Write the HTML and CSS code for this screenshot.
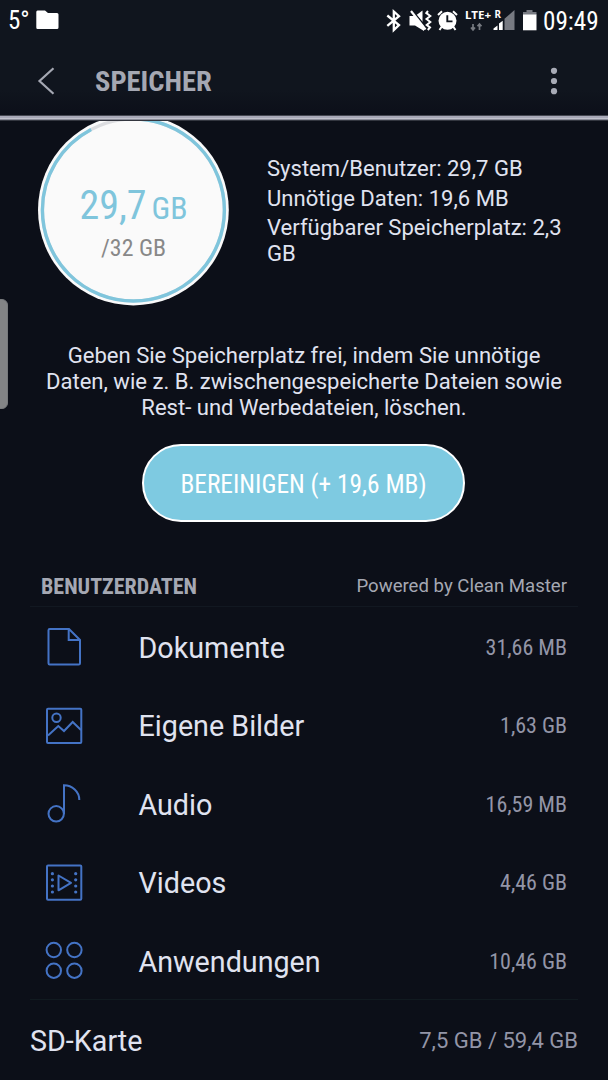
FILE: index.html
```html
<!DOCTYPE html>
<html lang="de">
<head>
<meta charset="utf-8">
<title>Speicher</title>
<link rel="stylesheet" href="styles.css">
</head>
<body>
<div class="screen">
  <div class="top">
    <div class="status">
      <span class="temp cond">5°</span>
      <svg class="folder" width="23" height="20" viewBox="0 0 23 20"><path d="M1.5 0.5H9L12 3H21Q22.5 3 22.5 4.5V17.5Q22.5 19 21 19H1.5Q0.3 19 0.3 17.5V2Q0.3 .5 1.5 .5Z" fill="#fff"/></svg>
      <svg class="tray" width="154" height="32" viewBox="0 -8 154 32">
        <path d="M2.3 6.5L14 16L8.8 21V2.5L14 7.2L2.3 16.8" fill="none" stroke="#fff" stroke-width="2.3"/>
        <g fill="#fff"><path d="M24.5 7H30L39 17.5V22L30 16.5H24.5Z"/><path d="M31.5 6L37.5 1.5V13Z"/></g>
        <path d="M27.5 1.5L42 19.5" stroke="#10151e" stroke-width="1.2"/>
        <path d="M26 2L40.5 20.5" stroke="#fff" stroke-width="2.2"/>
        <path d="M43 2L41.3 4L45.3 7L41.5 10L45.3 13L41.7 16L45 18.5L42.8 21" fill="none" stroke="#fff" stroke-width="2"/>
        <circle cx="62.5" cy="11.8" r="9" fill="#fff"/>
        <path d="M53 6L57 2.3M72 6L68 2.3M56.5 18L54.5 21M68.5 18L70.5 21" stroke="#fff" stroke-width="2"/>
        <path d="M62.3 6.2V12.4H67.5" fill="none" stroke="#10151e" stroke-width="1.9"/>
        <path d="M88 15V21M86 18.5L88 21L90 18.5M94.5 21V15M92.5 17.3L94.5 15L96.5 17.3" fill="none" stroke="#777b82" stroke-width="1.7"/>
        <path d="M119.5 9.7L129.5 1V21H119.5Z" fill="#777a82"/>
        <path d="M114 14.5L117.7 11.8V21H114ZM108.5 19.5L112.5 16.5V21H108.5Z" fill="#fff"/>
        <path d="M141.5 1H147.5V3H151.5V6H138V3H141.5Z" fill="#777a82"/>
        <path d="M138 5.5H151.5V21.3H138Z" fill="#fff"/>
        <text class="net" x="80" y="10.2" textLength="26" lengthAdjust="spacingAndGlyphs">LTE+</text>
        <text class="net" x="109.5" y="9.2" textLength="6.5" lengthAdjust="spacingAndGlyphs">R</text>
      </svg>
      <span class="clock cond">09:49</span>
    </div>
    <div class="header">
      <svg class="back" width="18" height="28" viewBox="0 0 18 28"><path d="M16.5 1.3L2.5 14L16.5 26.7" fill="none" stroke="#a5a8b3" stroke-width="2.2"/></svg>
      <h1 class="title cond">SPEICHER</h1>
      <svg class="more" width="8" height="28" viewBox="0 0 8 28" fill="#a8abb6"><circle cx="4" cy="3.8" r="3.1"/><circle cx="4" cy="14" r="3.1"/><circle cx="4" cy="24.2" r="3.1"/></svg>
    </div>
    <div class="edge"></div>
  </div>

  <div class="summary">
    <svg class="ring" width="192" height="185" viewBox="38 121 192 185">
      <circle cx="133.4" cy="210" r="95.4" fill="#fafafa"/>
      <circle cx="133.4" cy="210" r="91" fill="none" stroke="#dcdde0" stroke-width="3.2"/>
      <circle cx="133.4" cy="210" r="91" fill="none" stroke="#7fc5dc" stroke-width="3.4" pathLength="100" stroke-dasharray="92.3 7.7" transform="rotate(-90 133.4 210)"/>
      <text class="used" x="79.5" y="218.8" textLength="67" lengthAdjust="spacingAndGlyphs">29,7</text>
      <text class="used-unit" x="151.5" y="218.8" textLength="36" lengthAdjust="spacingAndGlyphs">GB</text>
      <text class="total" x="101" y="255.7" textLength="65" lengthAdjust="spacingAndGlyphs">/32 GB</text>
    </svg>
    <div class="facts">
      <p>System/Benutzer: 29,7 GB</p>
      <p>Unnötige Daten: 19,6 MB</p>
      <p>Verfügbarer Speicherplatz: 2,3 GB</p>
    </div>
  </div>
  <p class="hint">Geben Sie Speicherplatz frei, indem Sie unnötige<br>Daten, wie z. B. zwischengespeicherte Dateien sowie<br>Rest- und Werbedateien, löschen.</p>
  <button class="clean"><span class="cond">BEREINIGEN (+ 19,6 MB)</span></button>

  <div class="section">
    <h2 class="cond">BENUTZERDATEN</h2>
    <span class="powered">Powered by Clean Master</span>
  </div>
  <div class="list">
    <div class="row">
      <svg class="icon" viewBox="0 0 40 40"><path d="M5.7 2H25L36 13V36.2Q36 37.5 34.7 37.5H5.7Q4.5 37.5 4.5 36.2V3.2Q4.5 2 5.7 2ZM24.7 2V13H36"/></svg>
      <span class="name">Dokumente</span><span class="value cond">31,66 MB</span>
    </div>
    <div class="row">
      <svg class="icon" viewBox="0 0 40 40"><rect x="3" y="2.7" width="34.3" height="34.3" rx="1"/><circle cx="12.5" cy="11.8" r="4.2"/><path d="M4 29.5L14.3 20L20 25L28.7 16L37 24"/></svg>
      <span class="name">Eigene Bilder</span><span class="value cond">1,63 GB</span>
    </div>
    <div class="row">
      <svg class="icon" viewBox="0 0 40 40"><circle cx="12.2" cy="29.8" r="7.7"/><path d="M20 30V1.2C28 1.2 35.5 7.5 35.3 16"/></svg>
      <span class="name">Audio</span><span class="value cond">16,59 MB</span>
    </div>
    <div class="row">
      <svg class="icon" viewBox="0 0 40 40"><rect x="3" y="2.5" width="34.3" height="34.3" rx="1"/><path d="M14.5 12.5V27.3L27 19.8Z" stroke-linejoin="round"/><g fill="#4473c5" stroke="none"><circle cx="8.4" cy="10.7" r="1.6"/><circle cx="8.4" cy="16.8" r="1.6"/><circle cx="8.4" cy="23" r="1.6"/><circle cx="8.4" cy="29" r="1.6"/><circle cx="31.7" cy="10.7" r="1.6"/><circle cx="31.7" cy="16.8" r="1.6"/><circle cx="31.7" cy="23" r="1.6"/><circle cx="31.7" cy="29" r="1.6"/></g></svg>
      <span class="name">Videos</span><span class="value cond">4,46 GB</span>
    </div>
    <div class="row">
      <svg class="icon" viewBox="0 0 40 40"><circle cx="9.8" cy="9" r="7.2"/><circle cx="30.4" cy="9" r="7.2"/><circle cx="9.8" cy="29.7" r="7.2"/><circle cx="30.4" cy="29.7" r="7.2"/></svg>
      <span class="name">Anwendungen</span><span class="value cond">10,46 GB</span>
    </div>
  </div>
  <div class="sd"><span class="name">SD-Karte</span><span class="sd-value">7,5 GB / 59,4 GB</span></div>
  <div class="handle"></div>
</div>
</body>
</html>
```

FILE: styles.css
```css
* { box-sizing: border-box; margin: 0; padding: 0; }
body { background: #0c0f18; font-family: Roboto, "Liberation Sans", sans-serif; color: #e0e3f0; }
.screen { position: relative; width: 608px; height: 1080px; overflow: hidden; }
.cond { font-family: "Roboto Condensed", Roboto, sans-serif; font-stretch: 75%; white-space: nowrap; }

.top { height: 121px; background: linear-gradient(#10151e 90px, #0c0f19 115px); }
.status { display: flex; height: 40px; padding: 9px 9px 0 8px; }
.temp { width: 28px; font-size: 25px; line-height: 24px; color: #fff; }
.folder { margin-top: 1px; }
.tray { margin: -8px 0 0 326px; flex: none; overflow: visible; }
.clock { margin-left: 4px; font-size: 25.2px; line-height: 25px; color: #fff; }
.net { font: bold 10.5px "Noto Sans", sans-serif; fill: #fff; }
.header { display: flex; align-items: center; height: 75px; padding: 7px 50px 0 37px; }
.title { margin-left: 40px; padding-top: 2px; font-size: 28.5px; line-height: 34px; font-weight: 700; color: #a5a8b3; }
.more { margin-left: auto; }
.edge { height: 6px; background: linear-gradient(#454852 0 1px, #a8a9b8 1px 3px, #c0c1cc 3px 4px, #898b98 4px 5px, #33363f 5px); }

.summary { display: flex; height: 222px; padding-left: 38px; }
.ring { flex: none; }
.used { font: 40px "Roboto Condensed", Roboto, sans-serif; fill: #7fc5dc; }
.used-unit { font: 31px "Roboto Condensed", Roboto, sans-serif; fill: #7fc5dc; }
.total { font: 23px "Roboto Condensed", Roboto, sans-serif; fill: #888; }
.facts { width: 312px; margin-left: 37px; padding-top: 35px; font-size: 22.05px; line-height: 25.6px; }
.facts p + p { margin-top: 4px; }
.hint { text-align: center; font-size: 22.07px; line-height: 25.8px; }
.clean { display: flex; align-items: center; justify-content: center; width: 323px; height: 78px; margin: 23.5px 0 0 142px; padding-top: 3px; border: 2px solid #fff; border-radius: 39px; background: #7ecae1; color: #fff; font-size: 25.4px; }

.section { display: flex; justify-content: space-between; align-items: flex-end; height: 85px; margin: 0 30px; padding: 0 11px 6px; border-bottom: 1px solid #121821; }
h2 { font-size: 22px; line-height: 26px; font-weight: 700; color: #a5a8b3; }
.powered { font-size: 18.6px; line-height: 27px; color: #a5a8b3; }
.row { display: flex; align-items: center; height: 78.5px; padding: 2px 41px 0 44px; }
.icon { width: 40px; height: 40px; margin-right: 54.5px; fill: none; stroke: #4473c5; stroke-width: 2; }
.name { padding-top: 1.5px; font-size: 28.7px; line-height: 34px; }
.value { margin-left: auto; font-size: 22px; color: #9395a7; }
.sd { display: flex; align-items: center; justify-content: space-between; height: 80px; margin: 0 30px; padding-top: 1px; border-top: 1px solid #111a20; }
.sd-value { font-size: 22px; color: #9395a7; }
.handle { position: absolute; left: -8px; top: 299px; width: 16px; height: 110px; border-radius: 6px; background: #838486; border: 1px solid #77797c; }
```
